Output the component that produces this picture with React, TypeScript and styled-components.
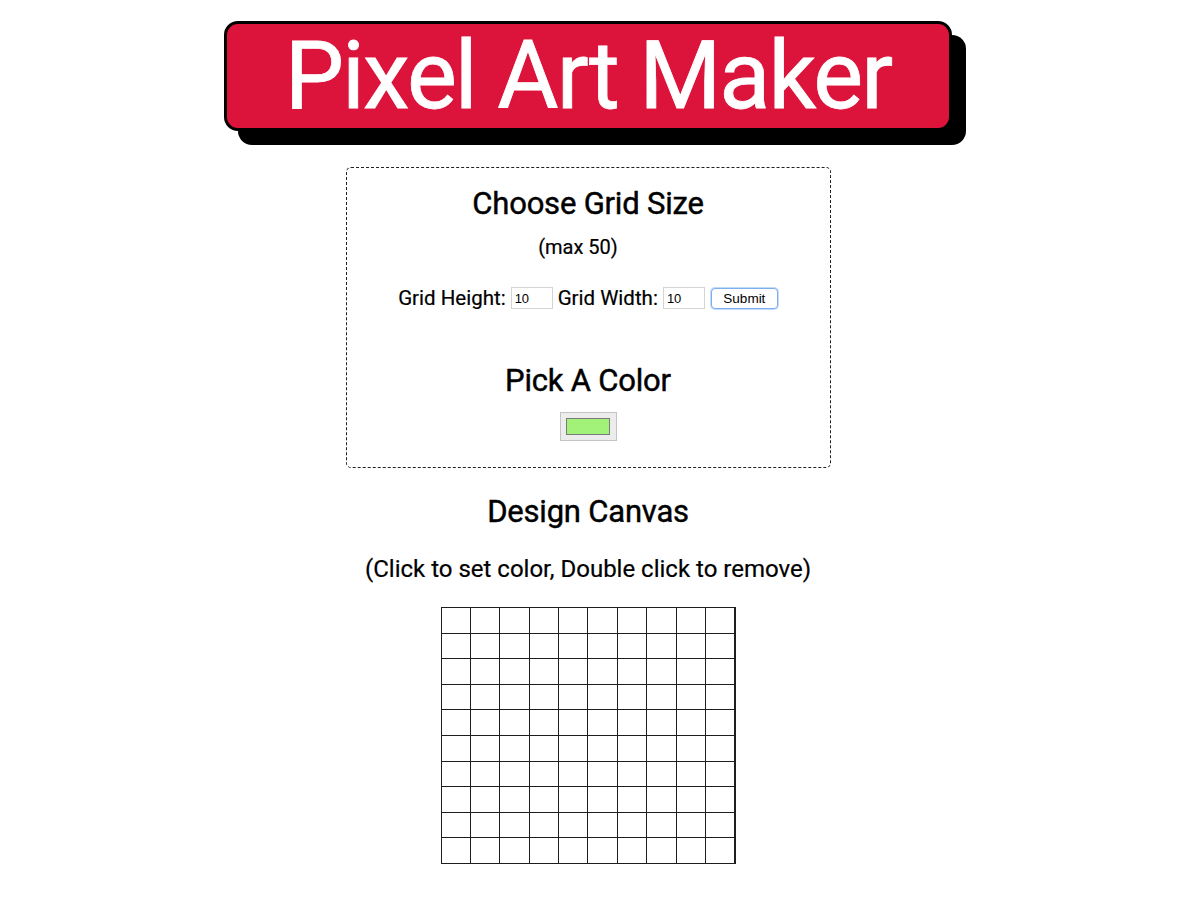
import React from 'react';
import styled, { createGlobalStyle } from 'styled-components';

const GlobalStyle = createGlobalStyle`
    body {
        margin: 0;
        background: #fff;
        font-family: Roboto, "Liberation Sans", sans-serif;
        color: #000;
    }
`;

const Page = styled.div`
    width: 1176px;
    display: flex;
    flex-direction: column;
    align-items: center;
    padding-top: 21px;
`;

const TitleBox = styled.div`
    width: 722px;
    height: 104px;
    background: #dc143c;
    border: 3px solid #000;
    border-radius: 14px;
    box-shadow: 14px 14px 0 #000;
    display: flex;
    justify-content: center;
    align-items: center;
`;

const Title = styled.h1`
    margin: 0;
    color: #fff;
    font-size: 94px;
    font-weight: 400;
    line-height: 104px;
    letter-spacing: -1.9px;
    -webkit-text-stroke: 0.8px #fff;
`;

const Panel = styled.div`
    margin-top: 36px;
    width: 483px;
    border: 1px dashed #222;
    border-radius: 5px;
    padding: 18px 0 26px;
    display: flex;
    flex-direction: column;
    align-items: center;
`;

const Heading = styled.h2<{ $top?: number }>`
    margin: ${p => p.$top ?? 0}px 0 0;
    font-size: 31px;
    font-weight: 400;
    line-height: 36px;
    letter-spacing: -0.2px;
    -webkit-text-stroke: 0.45px #000;
`;

const Note = styled.p<{ $size: number; $top: number; $shift?: number }>`
    margin: ${p => p.$top}px ${p => p.$shift ?? 0}px 0 0;
    font-size: ${p => p.$size}px;
    line-height: 24px;
    -webkit-text-stroke: 0.2px #000;
`;

const FormRow = styled.form`
    margin-top: 27px;
    display: flex;
    align-items: center;
    gap: 5px;
    font-size: 20.5px;
    line-height: 24px;
    -webkit-text-stroke: 0.2px #000;
`;

const SizeInput = styled.input`
    box-sizing: border-box;
    width: 42px;
    height: 22px;
    border: 1px solid #d4d4d4;
    padding: 1px 3px;
    font-family: "Liberation Sans", sans-serif;
    font-size: 13px;
    -webkit-text-stroke: 0;
`;

const SubmitButton = styled.button`
    box-sizing: border-box;
    width: 67px;
    height: 21px;
    margin-left: 1px;
    background: #fff;
    border: 1px solid #7eaef0;
    border-radius: 4px;
    box-shadow: 0 0 0 1px #c3dbfb;
    font-family: "Liberation Sans", sans-serif;
    font-size: 13.5px;
    padding: 0;
    -webkit-text-stroke: 0;
`;

const ColorWell = styled.div`
    margin-top: 13px;
    box-sizing: border-box;
    width: 57px;
    height: 29px;
    background: #ececec;
    border: 1px solid #c4c4c4;
    display: flex;
    justify-content: center;
    align-items: center;
`;

const Swatch = styled.div<{ $color: string }>`
    box-sizing: border-box;
    width: 44px;
    height: 17px;
    background: ${p => p.$color};
    border: 1px solid #7a7a7a;
`;

const Canvas = styled.div<{ $cols: number; $rows: number }>`
    margin-top: 26px;
    box-sizing: border-box;
    width: 295px;
    height: 257px;
    display: grid;
    grid-template-columns: repeat(${p => p.$cols}, 1fr);
    grid-template-rows: repeat(${p => p.$rows}, 1fr);
    gap: 1px;
    background: #1e1e1e;
    border: 1px solid #1e1e1e;
`;

const Cell = styled.div`
    background: #fff;
`;

function App() {
    const rows = 10;
    const cols = 10;
    const cells = Array.from({ length: rows * cols }, (_, i) => i);

    return (
        <Page>
            <GlobalStyle />
            <TitleBox>
                <Title>Pixel Art Maker</Title>
            </TitleBox>

            <Panel>
                <Heading>Choose Grid Size</Heading>
                <Note $size={20} $top={13} $shift={20}>(max 50)</Note>
                <FormRow onSubmit={e => e.preventDefault()}>
                    <span>Grid Height:</span>
                    <SizeInput type="number" defaultValue={10} />
                    <span>Grid Width:</span>
                    <SizeInput type="number" defaultValue={10} />
                    <SubmitButton type="submit">Submit</SubmitButton>
                </FormRow>
                <Heading $top={53}>Pick A Color</Heading>
                <ColorWell>
                    <Swatch $color="#a2f27a" />
                </ColorWell>
            </Panel>

            <Heading $top={26}>Design Canvas</Heading>
            <Note $size={24} $top={27}>(Click to set color, Double click to remove)</Note>
            <Canvas $cols={cols} $rows={rows}>
                {cells.map(i => <Cell key={i} />)}
            </Canvas>
        </Page>
    );
}

export default App;
